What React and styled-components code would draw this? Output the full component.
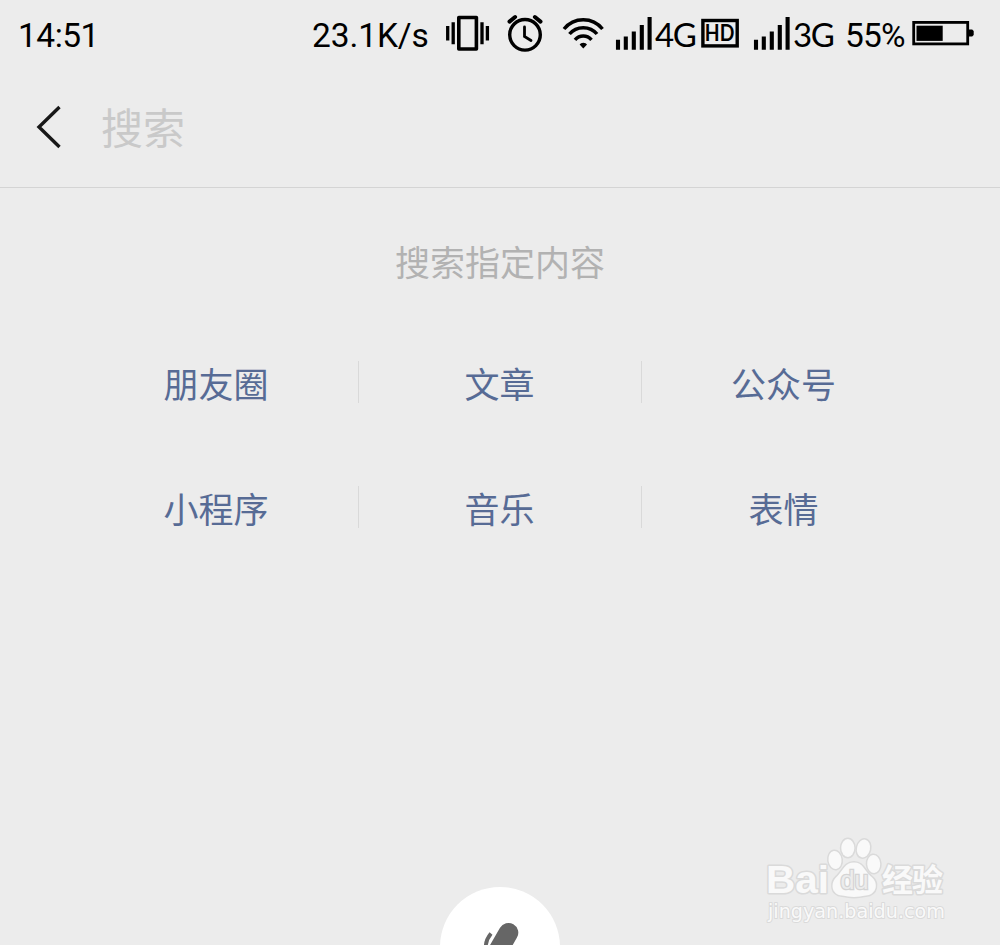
import React from 'react';
import styled, { createGlobalStyle } from 'styled-components';

const GlobalStyle = createGlobalStyle`
    html, body {
        margin: 0;
        height: 100%;
        overflow: hidden;
        background: #ececec;
    }
`

const Screen = styled.div`
    position: relative;
    display: flex;
    flex-direction: column;
    width: 1000px;
    height: 945px;
    overflow: hidden;
    background: #ececec;
    font-family: Roboto, "Noto Sans CJK SC", sans-serif;
`

const StatusBar = styled.header`
    display: flex;
    align-items: center;
    height: 70px;
    padding-left: 18px;
    color: #000;
`

const StatusText = styled.span`
    flex: none;
    width: ${props => props.$width}px;
    margin-top: 2px;
    font-size: 33.5px;
    line-height: 70px;
    letter-spacing: ${props => props.$spacing || 0}px;
    white-space: nowrap;
`

const NetworkText = styled(StatusText)`
    margin-top: 0;
    font-family: Lato, sans-serif;
    font-size: 33px;
    line-height: 68px;
    height: 70px;
    letter-spacing: -1.5px;
`

const StatusIcon = styled.svg`
    display: block;
    flex: none;
    height: 70px;
    margin-right: ${props => props.$gap || 0}px;
`

const SearchBar = styled.div`
    box-sizing: border-box;
    display: flex;
    align-items: center;
    height: 118px;
    padding: 0 0 4px 36px;
    border-bottom: 1px solid #d4d4d4;
`

const BackIcon = styled.svg`
    display: block;
    width: 26px;
    height: 44px;
    margin-right: 39px;
`

const Placeholder = styled.span`
    color: #c9c9c9;
    font-family: "Noto Sans CJK SC", sans-serif;
    font-size: 42px;
    line-height: 60px;
    height: 62px;
`

const Content = styled.main`
    flex: 1;
    display: flex;
    flex-direction: column;
    align-items: center;
    padding-top: 48px;
    font-family: "Noto Sans CJK SC", sans-serif;
    font-size: 35px;
    line-height: 50px;
`

const Title = styled.div`
    color: #b2b2b2;
`

const Categories = styled.div`
    display: grid;
    grid-template-columns: 284px 283px 284px;
    row-gap: 83px;
    margin-top: 75px;
`

const Category = styled.a`
    box-sizing: border-box;
    height: 42px;
    border-right: ${props => (props.$last ? 'none' : '1px solid #d9d9d9')};
    color: #576b95;
    line-height: 43px;
    text-align: center;
`

const VoiceButton = styled.button`
    position: absolute;
    left: 440px;
    top: 887px;
    width: 120px;
    height: 120px;
    padding: 0;
    border: none;
    border-radius: 50%;
    background: #fff;
`

const Watermark = styled.svg`
    position: absolute;
    left: 760px;
    top: 830px;
`

const VoiceIcon = styled.svg`
    display: block;
`

const categories = ['朋友圈', '文章', '公众号', '小程序', '音乐', '表情'];

const Vibrate = () => (
    <StatusIcon $gap={16} width="44" viewBox="0 0 44 70">
        <rect x="12.8" y="17.5" width="17.6" height="31.5" fill="none" stroke="#000" strokeWidth="3.6" strokeLinejoin="round" />
        <path d="M1.7 26v14.5M7.2 22.3v22M36 22.3v22M41.4 26v14.5" stroke="#000" strokeWidth="3.3" />
    </StatusIcon>
)

const Alarm = () => (
    <StatusIcon $gap={17} width="39" viewBox="0 0 39 70">
        <g fill="none" stroke="#000" strokeWidth="3.4" strokeLinecap="round">
            <circle cx="19" cy="34.8" r="15.3" />
            <path d="M18.5 27v9.5l6.5 4" strokeWidth="2.8" />
            <path d="M3.5 21.6l5.6-4.6M34.5 21.6l-5.6-4.6" strokeWidth="4" />
        </g>
    </StatusIcon>
)

const Wifi = () => (
    <StatusIcon $gap={11} width="42" viewBox="0 0 42 70">
        <g fill="none" stroke="#000" strokeWidth="3.5">
            <path d="M2 29C12 16.7 30.5 16.7 40.5 29" />
            <path d="M7.5 34C14.5 25.5 28 25.5 35 34" />
            <path d="M13 39.8C17.5 34.7 25 34.7 29.5 39.8" />
        </g>
        <path d="M17.6 44.5a4 3 0 0 1 7.4 0L21.3 48.5z" fill="#000" />
    </StatusIcon>
)

const Signal = ({ gap }) => (
    <StatusIcon $gap={gap} width="37" viewBox="0 0 37 70">
        <path d="M3 39.8v10M10.8 36.5v13.3M18.8 31.5v18.3M26.8 25v24.8M34.6 17v32.8" stroke="#000" strokeWidth="4.1" />
    </StatusIcon>
)

const HdBadge = () => (
    <StatusIcon $gap={14} width="38" viewBox="0 0 38 70">
        <rect x="1.9" y="20.5" width="34.3" height="25.4" fill="none" stroke="#000" strokeWidth="3.4" />
        <text x="3.8" y="41.3" fontFamily="Lato, sans-serif" fontWeight="700" fontSize="22.5" textLength="29.5" lengthAdjust="spacingAndGlyphs">HD</text>
    </StatusIcon>
)

const Battery = () => (
    <StatusIcon width="63" viewBox="0 0 63 70">
        <rect x="1.7" y="22.4" width="54" height="21.5" fill="none" stroke="#000" strokeWidth="2.8" />
        <rect x="4.5" y="25.7" width="26.2" height="15.2" fill="#000" />
        <path d="M57 29.5h3.2l1.5 1.5v4l-1.5 1.5H57z" fill="#000" />
    </StatusIcon>
)

const toes = [
    { x: 87.8, y: 18, angle: 0 },
    { x: 103.5, y: 18.5, angle: 12 },
    { x: 75, y: 30, angle: -8 },
    { x: 113.7, y: 34, angle: -4 },
];

const BaiduLogo = () => (
    <Watermark width="200" height="105" viewBox="0 0 200 105">
        <g fill="#f9f9f9" stroke="#dadada" strokeWidth="3" strokeLinejoin="round" paintOrder="stroke">
            <text x="6" y="63" fontFamily="Liberation Sans, sans-serif" fontWeight="700" fontSize="39" textLength="63" lengthAdjust="spacingAndGlyphs">Bai</text>
            {toes.map(toe => (
                <ellipse key={toe.x} cx={toe.x} cy={toe.y} rx="6.5" ry="9" transform={`rotate(${toe.angle} ${toe.x} ${toe.y})`} />
            ))}
            <path d="M94 32.5c-9 0-11 8-17 14-7 6-6 18 5 19 5 .5 7 1.5 12 1.5s7-1 12-1.5c11-1 13-13 5-19-7-6-8-14-17-14z" />
            <text x="122" y="61" fontFamily="Noto Sans CJK SC, sans-serif" fontWeight="700" fontSize="31" textLength="61">经验</text>
            <text x="8" y="87.5" fontFamily="DejaVu Sans, sans-serif" fontSize="20" textLength="177" lengthAdjust="spacingAndGlyphs" strokeWidth="2">jingyan.baidu.com</text>
        </g>
        <text x="80.5" y="58.5" fill="#ececec" stroke="#d4d4d4" strokeWidth="2.6" paintOrder="stroke" fontFamily="Liberation Sans, sans-serif" fontSize="25" textLength="28" lengthAdjust="spacingAndGlyphs">du</text>
    </Watermark>
)

const Microphone = () => (
    <VoiceIcon width="120" height="120" viewBox="0 0 120 120">
        <g fill="none" stroke="#666" strokeLinecap="round">
            <path d="M68.5 45.7L58.5 63" strokeWidth="19.6" />
            <path d="M51 46.5C46.5 52 44 60 48 68c3 6 9 8 15 7M56 75l-5 9" strokeWidth="3.8" strokeLinecap="butt" />
        </g>
    </VoiceIcon>
)

const App = () => {
    return (
        <Screen>
            <GlobalStyle />
            <StatusBar>
                <StatusText $width={294} $spacing={-0.5}>14:51</StatusText>
                <StatusText $width={134} $spacing={-0.1}>23.1K/s</StatusText>
                <Vibrate />
                <Alarm />
                <Wifi />
                <Signal gap={3} />
                <NetworkText $width={46}>4G</NetworkText>
                <HdBadge />
                <Signal gap={3} />
                <NetworkText $width={52}>3G</NetworkText>
                <StatusText $width={67} $spacing={-0.8}>55%</StatusText>
                <Battery />
            </StatusBar>
            <SearchBar>
                <BackIcon viewBox="0 0 26 44">
                    <path d="M23.5 2L3 22l20.5 20" fill="none" stroke="#181818" strokeWidth="3.4" />
                </BackIcon>
                <Placeholder>搜索</Placeholder>
            </SearchBar>
            <Content>
                <Title>搜索指定内容</Title>
                <Categories>
                    {categories.map((name, i) => (
                        <Category key={name} $last={i % 3 === 2}>{name}</Category>
                    ))}
                </Categories>
            </Content>
            <VoiceButton aria-label="Voice search">
                <Microphone />
            </VoiceButton>
            <BaiduLogo />
        </Screen>
    )
}

export default App;
